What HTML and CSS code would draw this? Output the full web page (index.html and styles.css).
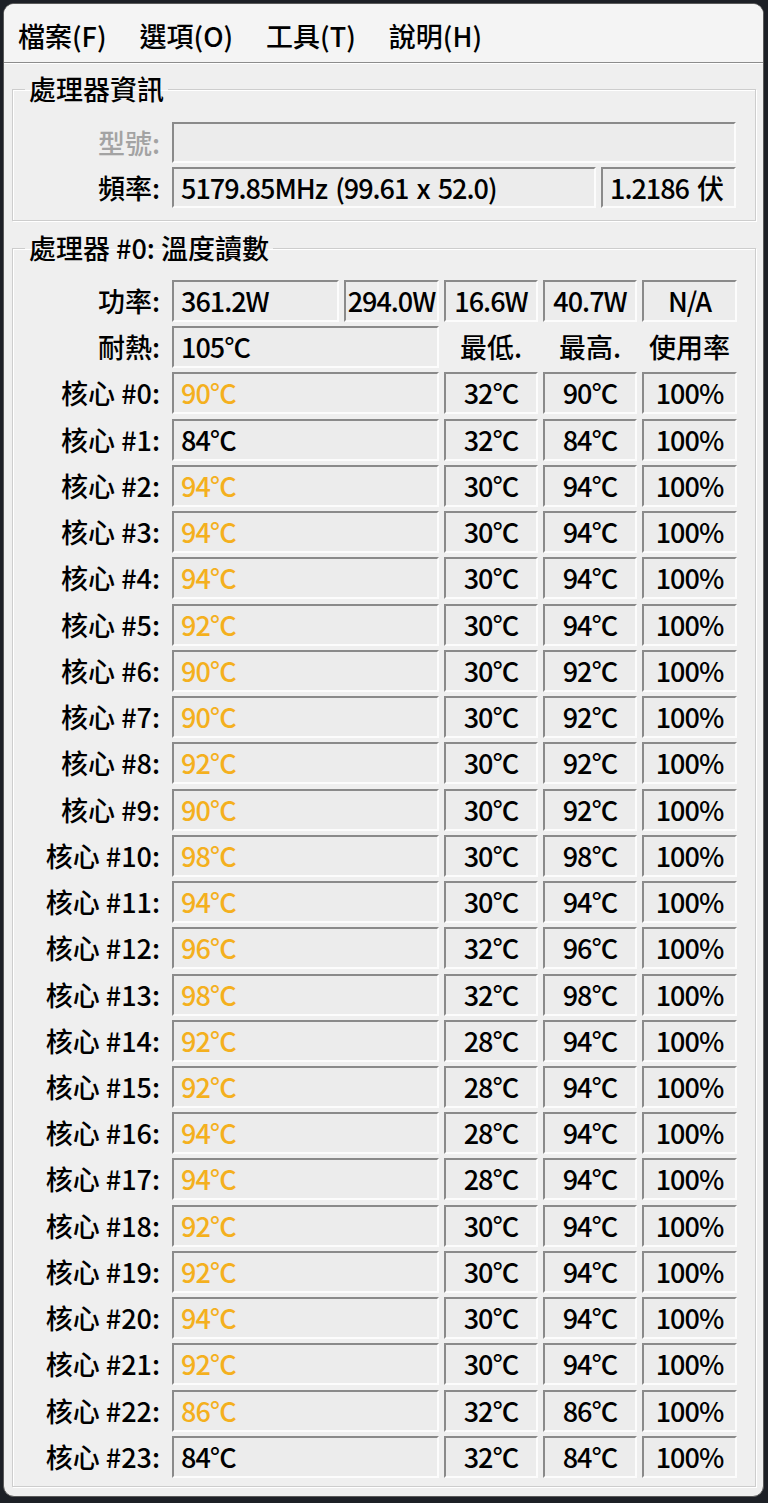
FILE: index.html
```html
<!DOCTYPE html>
<html lang="zh-Hant">
<head>
    <meta charset="UTF-8">
    <meta name="viewport" content="width=device-width, initial-scale=1.0">
    <title>處理器溫度</title>
    <link rel="stylesheet" href="styles.css">
</head>
<body>
    <div class="window">
        <div class="menu-bar">
            <span class="menu-item">檔案(F)</span>
            <span class="menu-item">選項(O)</span>
            <span class="menu-item">工具(T)</span>
            <span class="menu-item">說明(H)</span>
        </div>

        <fieldset class="group group-info">
            <legend>處理器資訊</legend>
            <div class="info-grid">
                <div class="label disabled">型號:</div>
                <div class="field span-all"></div>
                <div class="label">頻率:</div>
                <div class="field">5179.85MHz (99.61 x 52.0)</div>
                <div class="field">1.2186 伏</div>
            </div>
        </fieldset>

        <fieldset class="group group-temp">
            <legend>處理器 #0: 溫度讀數</legend>
            <div class="temp-grid">
                <div class="label">功率:</div>
                <div class="field">361.2W</div>
                <div class="field center">294.0W</div>
                <div class="field center">16.6W</div>
                <div class="field center">40.7W</div>
                <div class="field center">N/A</div>

                <div class="label">耐熱:</div>
                <div class="field wide">105°C</div>
                <div class="head">最低.</div>
                <div class="head">最高.</div>
                <div class="head">使用率</div>

                <div class="label">核心 #0:</div>
                <div class="field wide hot">90°C</div>
                <div class="field center">32°C</div>
                <div class="field center">90°C</div>
                <div class="field center">100%</div>

                <div class="label">核心 #1:</div>
                <div class="field wide">84°C</div>
                <div class="field center">32°C</div>
                <div class="field center">84°C</div>
                <div class="field center">100%</div>

                <div class="label">核心 #2:</div>
                <div class="field wide hot">94°C</div>
                <div class="field center">30°C</div>
                <div class="field center">94°C</div>
                <div class="field center">100%</div>

                <div class="label">核心 #3:</div>
                <div class="field wide hot">94°C</div>
                <div class="field center">30°C</div>
                <div class="field center">94°C</div>
                <div class="field center">100%</div>

                <div class="label">核心 #4:</div>
                <div class="field wide hot">94°C</div>
                <div class="field center">30°C</div>
                <div class="field center">94°C</div>
                <div class="field center">100%</div>

                <div class="label">核心 #5:</div>
                <div class="field wide hot">92°C</div>
                <div class="field center">30°C</div>
                <div class="field center">94°C</div>
                <div class="field center">100%</div>

                <div class="label">核心 #6:</div>
                <div class="field wide hot">90°C</div>
                <div class="field center">30°C</div>
                <div class="field center">92°C</div>
                <div class="field center">100%</div>

                <div class="label">核心 #7:</div>
                <div class="field wide hot">90°C</div>
                <div class="field center">30°C</div>
                <div class="field center">92°C</div>
                <div class="field center">100%</div>

                <div class="label">核心 #8:</div>
                <div class="field wide hot">92°C</div>
                <div class="field center">30°C</div>
                <div class="field center">92°C</div>
                <div class="field center">100%</div>

                <div class="label">核心 #9:</div>
                <div class="field wide hot">90°C</div>
                <div class="field center">30°C</div>
                <div class="field center">92°C</div>
                <div class="field center">100%</div>

                <div class="label">核心 #10:</div>
                <div class="field wide hot">98°C</div>
                <div class="field center">30°C</div>
                <div class="field center">98°C</div>
                <div class="field center">100%</div>

                <div class="label">核心 #11:</div>
                <div class="field wide hot">94°C</div>
                <div class="field center">30°C</div>
                <div class="field center">94°C</div>
                <div class="field center">100%</div>

                <div class="label">核心 #12:</div>
                <div class="field wide hot">96°C</div>
                <div class="field center">32°C</div>
                <div class="field center">96°C</div>
                <div class="field center">100%</div>

                <div class="label">核心 #13:</div>
                <div class="field wide hot">98°C</div>
                <div class="field center">32°C</div>
                <div class="field center">98°C</div>
                <div class="field center">100%</div>

                <div class="label">核心 #14:</div>
                <div class="field wide hot">92°C</div>
                <div class="field center">28°C</div>
                <div class="field center">94°C</div>
                <div class="field center">100%</div>

                <div class="label">核心 #15:</div>
                <div class="field wide hot">92°C</div>
                <div class="field center">28°C</div>
                <div class="field center">94°C</div>
                <div class="field center">100%</div>

                <div class="label">核心 #16:</div>
                <div class="field wide hot">94°C</div>
                <div class="field center">28°C</div>
                <div class="field center">94°C</div>
                <div class="field center">100%</div>

                <div class="label">核心 #17:</div>
                <div class="field wide hot">94°C</div>
                <div class="field center">28°C</div>
                <div class="field center">94°C</div>
                <div class="field center">100%</div>

                <div class="label">核心 #18:</div>
                <div class="field wide hot">92°C</div>
                <div class="field center">30°C</div>
                <div class="field center">94°C</div>
                <div class="field center">100%</div>

                <div class="label">核心 #19:</div>
                <div class="field wide hot">92°C</div>
                <div class="field center">30°C</div>
                <div class="field center">94°C</div>
                <div class="field center">100%</div>

                <div class="label">核心 #20:</div>
                <div class="field wide hot">94°C</div>
                <div class="field center">30°C</div>
                <div class="field center">94°C</div>
                <div class="field center">100%</div>

                <div class="label">核心 #21:</div>
                <div class="field wide hot">92°C</div>
                <div class="field center">30°C</div>
                <div class="field center">94°C</div>
                <div class="field center">100%</div>

                <div class="label">核心 #22:</div>
                <div class="field wide hot">86°C</div>
                <div class="field center">32°C</div>
                <div class="field center">86°C</div>
                <div class="field center">100%</div>

                <div class="label">核心 #23:</div>
                <div class="field wide">84°C</div>
                <div class="field center">32°C</div>
                <div class="field center">84°C</div>
                <div class="field center">100%</div>
            </div>
        </fieldset>
    </div>
</body>
</html>
```

FILE: styles.css
```css
body {
    margin: 0;
    padding: 3px 4px 6px 3px;
    background-color: #1d2026;
    font-family: "Noto Sans CJK TC", "Liberation Sans", sans-serif;
    font-size: 27px;
    font-weight: 500;
    color: #000;
}
.window {
    box-sizing: border-box;
    width: 761px;
    height: 1494px;
    background-color: #efefef;
    border: 1px solid #5a5a5a;
    border-radius: 11px;
    overflow: hidden;
}
.menu-bar {
    display: flex;
    gap: 33px;
    padding: 8px 0 3px 14px;
    height: 47px;
    line-height: 47px;
    background-color: #f4f4f4;
    border-bottom: 1px solid #8c8c8c;
    box-shadow: 0 1px 0 #fff;
}
.group {
    margin: 9px 7px 0 8px;
    padding: 16px 19px 12px 0;
    border: 1px solid #cdcdcd;
    box-shadow: inset 1px 1px 0 #fff, 1px 1px 0 #fff;
    min-width: 0;
}
.group legend {
    margin-left: 12px;
    padding: 0 4px;
    line-height: 34px;
}
.group-temp {
    margin-top: 10px;
    padding-top: 15px;
    padding-bottom: 8px;
}
.info-grid {
    display: grid;
    grid-template-columns: 154px 1fr 135px;
    grid-auto-rows: 41px;
    column-gap: 5px;
    row-gap: 4px;
}
.temp-grid {
    display: grid;
    grid-template-columns: 154px 167px 95px 94px 94px 95px;
    grid-auto-rows: 42px;
    column-gap: 5px;
    row-gap: 4.24px;
}
.label {
    text-align: right;
    padding-right: 7px;
    line-height: 42px;
    white-space: nowrap;
}
.label.disabled {
    color: #a3a3a3;
}
.field {
    box-sizing: border-box;
    padding-left: 7px;
    background-color: #ececec;
    border-top: 2px solid #8a8a8a;
    border-left: 2px solid #8a8a8a;
    border-bottom: 2px solid #fcfcfc;
    border-right: 2px solid #fcfcfc;
    line-height: 37px;
    letter-spacing: -1px;
    word-spacing: 3px;
    white-space: nowrap;
    overflow: hidden;
}
.field.center {
    padding-left: 0;
    text-align: center;
}
.span-all {
    grid-column: span 2;
}
.wide {
    grid-column: span 2;
}
.hot {
    color: #f4b01e;
}
.head {
    text-align: center;
    line-height: 42px;
    white-space: nowrap;
}
```
